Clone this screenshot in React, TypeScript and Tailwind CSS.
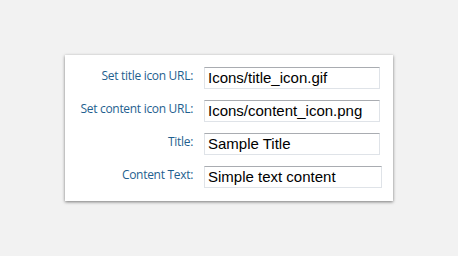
export default function App() {
  const rows = [
    { label: "Set title icon URL:", value: "Icons/title_icon.gif", w: "w-[176px]" },
    { label: "Set content icon URL:", value: "Icons/content_icon.png", w: "w-[176px]" },
    { label: "Title:", value: "Sample Title", w: "w-[176px]" },
    { label: "Content Text:", value: "Simple text content", w: "w-[178px]" },
  ];
  return (
    <div className="w-[458px] h-[256px] bg-[#f2f2f2] pt-[55px] pl-[65px]">
      <div className="w-[328px] h-[146px] bg-white shadow-[0_1px_3px_rgba(0,0,0,0.5)] pt-[12px] flex flex-col gap-[11px]">
        {rows.map((r) => (
          <div key={r.label} className="flex items-start">
            <div
              className="w-[128px] text-right text-[12px] leading-[16px] tracking-[-0.3px] text-[#1f5f8f] pt-[1px]"
              style={{ fontFamily: '"Open Sans", "Noto Sans", sans-serif' }}
            >
              {r.label}
            </div>
            <div
              className={`ml-[11px] ${r.w} h-[22px] bg-white border border-[#dfe3e8] border-t-[#a9acb1] pl-[3px] text-[15px] leading-[20px] text-black`}
              style={{ fontFamily: '"Liberation Sans", Arial, sans-serif' }}
            >
              {r.value}
            </div>
          </div>
        ))}
      </div>
    </div>
  );
}
